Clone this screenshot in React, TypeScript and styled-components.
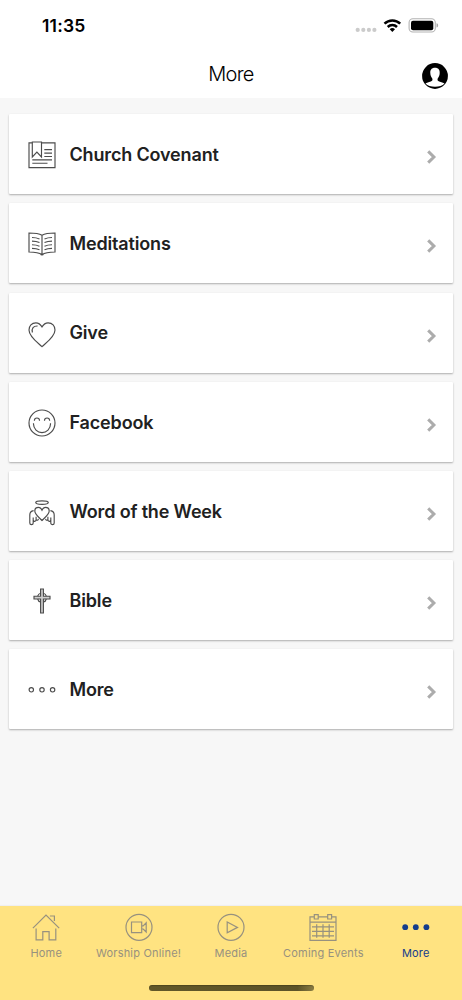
import React from 'react';
import styled, { createGlobalStyle } from 'styled-components';

const GlobalStyle = createGlobalStyle`
  *, *::before, *::after { box-sizing: border-box; }
  body { margin: 0; background: #f7f7f7; }
`;

const Screen = styled.div`
  width: 462px;
  height: 1000px;
  display: flex;
  flex-direction: column;
  overflow: hidden;
  background: #f7f7f7;
  font-family: Inter, 'Liberation Sans', sans-serif;
`;

const StatusBar = styled.div`
  height: 52px;
  background: #fff;
  display: flex;
  align-items: center;
  justify-content: space-between;
  padding: 0 23px 0 42px;
  flex: none;
`;

const Time = styled.span`
  font-size: 17.5px;
  font-weight: 600;
  line-height: 20px;
  letter-spacing: 0.2px;
  color: #000;
`;

const Header = styled.header`
  height: 46.3px;
  flex: none;
  background: #fff;
  display: grid;
  grid-template-columns: 40px 1fr 40px;
  align-items: center;
  justify-items: center;
  padding: 2px 7px 0;
`;

const Title = styled.h1`
  margin: 0;
  padding-bottom: 5px;
  font-size: 20px;
  line-height: 24px;
  font-weight: 300;
  letter-spacing: -0.7px;
  color: #000;
`;

const List = styled.main`
  flex: 1;
  display: flex;
  flex-direction: column;
  gap: 9.2px;
  padding: 16px 9px 0;
`;

const Card = styled.div`
  height: 80px;
  flex: none;
  display: flex;
  align-items: center;
  padding: 0 14px 0 19px;
  background: #fff;
  border-radius: 1px;
  box-shadow: 0 1px 2px rgba(0, 0, 0, 0.3);
`;

const CardIcon = styled.svg`
  width: 28px;
  height: 28px;
  flex: none;
  margin-top: 2px;
  fill: none;
  stroke: #4c4c4c;
  stroke-width: 1.15;
`;

const CardLabel = styled.span`
  flex: 1;
  margin: 1.4px 0 0 13.5px;
  font-size: 18px;
  line-height: 22px;
  font-weight: 600;
  letter-spacing: -0.16px;
  color: #212121;
`;

const Chevron = styled.svg`
  width: 14px;
  height: 16px;
  margin-top: 6px;
  fill: none;
  stroke: #acacac;
  stroke-width: 3;
`;

const TabBar = styled.nav`
  height: 94px;
  flex: none;
  background: #ffe381;
  box-shadow: 0 -1px 1px rgba(0, 0, 0, 0.03);
  display: flex;
  flex-direction: column;
  align-items: center;
`;

const Tabs = styled.div`
  width: 100%;
  display: grid;
  grid-template-columns: repeat(5, 1fr);
  padding-top: 7px;
`;

const Tab = styled.div<{ $active?: boolean }>`
  display: flex;
  flex-direction: column;
  align-items: center;
  color: ${(p) => (p.$active ? '#143c8c' : '#97917f')};
`;

const TabIcon = styled.svg`
  width: 28px;
  height: 28px;
  fill: none;
  stroke: currentColor;
  stroke-width: 1.2;
`;

const TabLabel = styled.span`
  margin-top: 5px;
  font-size: 11px;
  line-height: 14px;
  letter-spacing: 0.2px;
  white-space: nowrap;
`;

const HomeIndicator = styled.div`
  width: 165px;
  height: 5.5px;
  margin-top: 25px;
  border-radius: 3px;
  background: linear-gradient(90deg, #625829 0%, #5c5329 90%, #8b7d43 100%);
  box-shadow: inset 0 1px 1px rgba(40, 32, 8, 0.3);
`;

const CovenantIcon = () => (
  <CardIcon viewBox="0 0 28 28">
    <path d="M4.2 1.9H1v24.7h26V1.9H13.7" />
    <path d="M4.3 1h9.2v15l-4.6-4.8L4.3 16z" />
    <path d="M16.3 8.6H24M16.3 12.1H24M16.3 15.5H24M4.3 18.8H24M4.3 22.2h15.2" />
  </CardIcon>
);

const BookIcon = () => (
  <CardIcon viewBox="0 0 28 28">
    <path d="M14 5.3C10.5 3.2 6 3 1 3v19c5 0 10 .5 13 2.7 3-2.2 8-2.7 13-2.7V3c-5 0-9.5.2-13 2.3zM14 5.3v19.4" />
    <path d="M12.7 24.5h2.6" strokeWidth="1.6" />
    <path d="M4 7.5c3 0 5.2.4 7.5 1.5M4 11.1c3 0 5.2.4 7.5 1.5M4 14.7c3 0 5.2.4 7.5 1.5M4 18.3c3 0 5.2.4 7.5 1.5M24 7.5c-3 0-5.2.4-7.5 1.5M24 11.1c-3 0-5.2.4-7.5 1.5M24 14.7c-3 0-5.2.4-7.5 1.5M24 18.3c-3 0-5.2.4-7.5 1.5" />
  </CardIcon>
);

const HeartIcon = () => (
  <CardIcon viewBox="0 0 28 28">
    <path d="M14 6.9C12.3 4 10.3 2.8 7.9 2.8 3.7 2.8 1 5.8 1 10c0 6.6 8.5 12.500 13 16.700C18.500 22.500 27 16.600 27 10c0-4.200-2.700-7.200-6.900-7.200-2.400 0-4.400 1.200-6.100 4.100z" />
    <path d="M4.400 12.500C3.400 8.500 5.400 5.800 9.600 6" />
  </CardIcon>
);

const SmileIcon = () => (
  <CardIcon viewBox="0 0 28 28">
    <circle cx="14" cy="14" r="13" />
    <path d="M5.500 14.300v.8a8.500 8.500 0 0 0 17 0v-.8M6.400 11.800v-.3a2.550 2.550 0 0 1 5.100 0v.3M16.500 11.800v-.3a2.550 2.550 0 0 1 5.100 0v.3" />
  </CardIcon>
);

const AngelIcon = () => (
  <CardIcon viewBox="0 0 28 28">
    <ellipse cx="14" cy="4.600" rx="6.300" ry="1.800" />
    <path d="M14 12.200c-.9-2-2.100-2.900-3.600-2.900-2.200 0-3.600 1.700-3.600 3.700 0 3.700 4.300 6.300 7.200 9.500 2.900-3.200 7.200-5.800 7.200-9.500 0-2-1.400-3.700-3.600-3.700-1.500 0-2.700.9-3.600 2.900z" />
    <path d="M5.600 12.600C3.200 12.900 1.800 14.700 1.800 17v7.900c0 2.200 3.400 2.200 3.400 0v-5.400M5.200 21.800c0 2 2.900 2 2.900 0v-3M8.100 21.600c.9 1.200 2.400.6 2.200-.8" />
    <path d="M22.400 12.600c2.400.3 3.800 2.100 3.800 4.400v7.900c0 2.200-3.400 2.200-3.400 0v-5.400M22.800 21.800c0 2-2.900 2-2.900 0v-3M19.900 21.600c-.9 1.200-2.400.6-2.200-.8" />
  </CardIcon>
);

const CrossIcon = () => (
  <CardIcon viewBox="0 0 28 28">
    <path d="M12.600 2h2.800v7.200H22V12h-6.600v14h-2.800V12H6V9.200h6.600z" fill="#d0d0d0" />
    <path d="M9.700 9.200c.4-1.700 1.400-2.700 2.900-3M18.300 9.200c-.4-1.700-1.400-2.700-2.900-3M9.700 12c.4 1.700 1.400 2.700 2.900 3M18.300 12c-.4 1.700-1.400 2.700-2.900 3" />
  </CardIcon>
);

const DotsIcon = () => (
  <CardIcon viewBox="0 0 28 28">
    <circle cx="3.300" cy="13.800" r="2.200" />
    <circle cx="14" cy="13.800" r="2.200" />
    <circle cx="24.600" cy="13.800" r="2.200" />
  </CardIcon>
);

const items: { label: string; Icon: React.FC }[] = [
  { label: 'Church Covenant', Icon: CovenantIcon },
  { label: 'Meditations', Icon: BookIcon },
  { label: 'Give', Icon: HeartIcon },
  { label: 'Facebook', Icon: SmileIcon },
  { label: 'Word of the Week', Icon: AngelIcon },
  { label: 'Bible', Icon: CrossIcon },
  { label: 'More', Icon: DotsIcon },
];

const tabs: { label: string; active?: boolean; art: React.ReactNode }[] = [
  {
    label: 'Home',
    art: (
      <path d="M.9 15.200 14 2l13.200 13.200M4.100 15.500v11.300h6.700v-8.200h6.300v8.200h6.700V15.500M17.900 3h4.500v4.900" />
    ),
  },
  {
    label: 'Worship Online!',
    art: (
      <>
        <circle cx="14" cy="14.300" r="13" />
        <path d="M6.500 9h10.200v10.700H6.500zM16.700 12.800h1.500l3-3v9.200l-3-3h-1.500" />
      </>
    ),
  },
  {
    label: 'Media',
    art: (
      <>
        <circle cx="14" cy="14.300" r="13" />
        <path d="M10.200 9v10.700l10.300-5.300z" />
      </>
    ),
  },
  {
    label: 'Coming Events',
    art: (
      <path d="M5.200 3.800H1v23.500h26V3.800h-4.300M9.300 3.800h9.300M1 9.200h26M5.300 1.600h3.900V6H5.300zM18.700 1.600h3.900V6h-3.900zM3 13.900h22M3 18.400h22M3 22.900h22M7.700 11.200v13.500M14 11.200v13.500M20.200 11.200v13.500" />
    ),
  },
  {
    label: 'More',
    active: true,
    art: (
      <g fill="currentColor" stroke="none">
        <circle cx="3.200" cy="14.200" r="2.900" />
        <circle cx="13.800" cy="14.200" r="2.900" />
        <circle cx="24.400" cy="14.200" r="2.900" />
      </g>
    ),
  },
];

export default function App() {
  return (
    <Screen>
      <GlobalStyle />
      <StatusBar>
        <Time>11:35</Time>
        <svg width="84" height="20" viewBox="355 16 84 20" fill="none">
          <g fill="#cbcbcb">
            <circle cx="357.700" cy="29.900" r="2.100" />
            <circle cx="363.300" cy="29.900" r="2.100" />
            <circle cx="368.900" cy="29.900" r="2.100" />
            <circle cx="374.400" cy="29.900" r="2.100" />
          </g>
          <g stroke="#000" strokeWidth="2.500">
            <path d="M384.500 23.700a11.300 11.300 0 0 1 15.700 0" />
            <path d="M387.700 27a6.700 6.700 0 0 1 9.300 0" />
          </g>
          <path d="M389.700 29.200a3.900 3.900 0 0 1 5.300 0l-2.650 2.800z" fill="#000" />
          <rect x="409.100" y="18.800" width="26.200" height="13.200" rx="3.800" stroke="#b3b3b3" strokeWidth="1.100" />
          <rect x="411" y="20.800" width="22.300" height="9.400" rx="2" fill="#000" />
          <path d="M436.500 23.200c2.200.7 2.200 3.600 0 4.400z" fill="#a8a8a8" />
        </svg>
      </StatusBar>
      <Header>
        <span />
        <Title>More</Title>
        <svg width="26" height="26" viewBox="0 0 26 26">
          <circle cx="13" cy="13" r="12.900" fill="#000" />
          <path
            d="M13 4.800c-3.400 0-4.900 2.200-4.700 5.200.1 2.400.8 4 2 5.400.5 1.800-.1 2.500-1.500 3-2 .6-4.200 1-5.300 2.200 2 2.200 5.500 3.100 9.500 3.100s7.500-.9 9.500-3.100c-1.100-1.200-3.300-1.600-5.300-2.200-1.400-.5-2-1.200-1.500-3 1.200-1.400 1.900-3 2-5.400.2-3-1.300-5.200-4.700-5.200z"
            fill="#fff"
          />
        </svg>
      </Header>
      <List>
        {items.map(({ label, Icon }) => (
          <Card key={label}>
            <Icon />
            <CardLabel>{label}</CardLabel>
            <Chevron viewBox="0 0 14 16">
              <path d="M3.200 2.400 8.900 8l-5.700 5.600" />
            </Chevron>
          </Card>
        ))}
      </List>
      <TabBar>
        <Tabs>
          {tabs.map(({ label, active, art }) => (
            <Tab key={label} $active={active}>
              <TabIcon viewBox="0 0 28 28">{art}</TabIcon>
              <TabLabel>{label}</TabLabel>
            </Tab>
          ))}
        </Tabs>
        <HomeIndicator />
      </TabBar>
    </Screen>
  );
}
